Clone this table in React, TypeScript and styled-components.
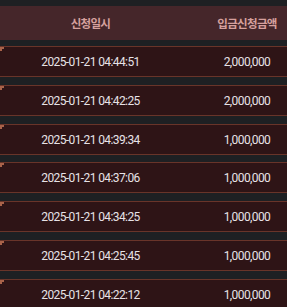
import styled, { createGlobalStyle } from 'styled-components';

const GlobalStyle = createGlobalStyle`
  html, body {
    margin: 0;
    padding: 0;
    background: #1e2023;
    overflow: hidden;
  }
`;

const Wrapper = styled.div`
  width: 287px;
  height: 307px;
  padding-top: 6px;
  box-sizing: border-box;
  font-family: Roboto, 'Noto Sans CJK KR', sans-serif;
  overflow: hidden;
`;

const HeaderRow = styled.div`
  display: grid;
  grid-template-columns: 181px 1fr;
  height: 34px;
  align-items: center;
  background: #45262a;
  margin-bottom: 6px;
`;

const HeadCell = styled.div<{ $shift?: number }>`
  text-align: center;
  padding-left: ${(p) => p.$shift || 0}px;
  color: #d6a09d;
  font-family: 'Noto Sans CJK KR', sans-serif;
  font-weight: 700;
  font-size: 11.5px;
  letter-spacing: -0.7px;
`;

const Row = styled.div`
  position: relative;
  display: grid;
  grid-template-columns: 181px 1fr;
  align-items: center;
  height: 31px;
  box-sizing: border-box;
  background: #2e1416;
  border-top: 1px solid #693429;
  border-bottom: 1px solid #693429;
  margin-bottom: 7.75px;

  &::before {
    content: '';
    position: absolute;
    left: 0;
    top: 0;
    width: 2px;
    height: 2px;
    border-top: 2px solid #a9634a;
    border-left: 2px solid #a9634a;
  }
`;

const Cell = styled.div<{ $shift?: number }>`
  text-align: center;
  padding-left: ${(p) => p.$shift || 0}px;
  color: #e7e2e6;
  font-size: 12px;
  letter-spacing: -0.6px;
  padding-top: 1px;
`;

const rows = [
  { date: '2025-01-21 04:44:51', amount: '2,000,000' },
  { date: '2025-01-21 04:42:25', amount: '2,000,000' },
  { date: '2025-01-21 04:39:34', amount: '1,000,000' },
  { date: '2025-01-21 04:37:06', amount: '1,000,000' },
  { date: '2025-01-21 04:34:25', amount: '1,000,000' },
  { date: '2025-01-21 04:25:45', amount: '1,000,000' },
  { date: '2025-01-21 04:22:12', amount: '1,000,000' },
];

function App() {
  return (
    <Wrapper>
      <GlobalStyle />
      <HeaderRow>
        <HeadCell>신청일시</HeadCell>
        <HeadCell $shift={26}>입금신청금액</HeadCell>
      </HeaderRow>
      {rows.map((item) => (
        <Row key={item.date}>
          <Cell>{item.date}</Cell>
          <Cell $shift={26}>{item.amount}</Cell>
        </Row>
      ))}
    </Wrapper>
  );
}

export default App;
